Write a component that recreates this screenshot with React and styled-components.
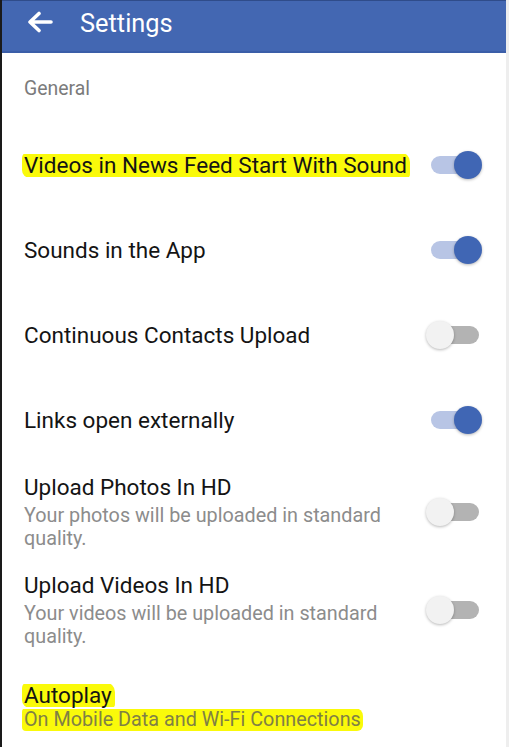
import React from "react";
import styled, { createGlobalStyle } from "styled-components";

const Global = createGlobalStyle`
  html, body { margin: 0; padding: 0; background: #fff; }
  body { font-family: Roboto, "Noto Sans", "Liberation Sans", sans-serif; -webkit-font-smoothing: antialiased; }
`;

const Screen = styled.div`
  width: 509px;
  height: 747px;
  overflow: hidden;
  box-sizing: border-box;
  background: #fff;
  border-left: 2px solid #1a1a1a;
  border-right: 3px solid #eeeeee;
  display: flex;
  flex-direction: column;
`;

const Header = styled.header`
  height: 53px;
  box-sizing: border-box;
  margin-left: -2px;
  margin-right: -3px;
  background: #4367b2;
  border-top: 1px solid #2f4c8a;
  border-bottom: 2px solid #3b5ea8;
  display: flex;
  align-items: center;
  padding-left: 27px;
  gap: 27px;
  color: #fff;
  flex-shrink: 0;
`;

const Title = styled.h1`
  margin: 0;
  font-size: 25.4px;
  font-weight: 400;
  margin-top: -7px;
`;

const BackIcon = styled.svg`
  width: 26px;
  height: 22px;
  margin-top: -8px;
`;

const SectionLabel = styled.div`
  padding: 24px 0 21px 22px;
  line-height: 24px;
  font-size: 19.4px;
  color: #7b7b7b;
`;

const Row = styled.div`
  display: flex;
  align-items: center;
  justify-content: space-between;
  min-height: ${(p) => p.$h || 85}px;
  box-sizing: border-box;
  padding: ${(p) => (p.$pad ? p.$pad : "0")} 24px 0 22px;
`;

const TextBlock = styled.div`
  display: flex;
  flex-direction: column;
  align-items: flex-start;
`;

const Label = styled.span`
  font-size: 22.5px;
  line-height: 26px;
  color: #141414;
  white-space: nowrap;
  ${(p) =>
    p.$mark &&
    `
    background: linear-gradient(to bottom, transparent 8%, #fafa0a 8%, #fafa0a 98%, transparent 98%);
    padding: 0 3px 0 2px;
    margin-left: -2px;
    border-radius: 6px 10px 4px 8px;
  `}
`;

const Sub = styled.span`
  font-size: 19.8px;
  line-height: 23px;
  color: #8c8c8c;
  margin-top: 4px;
  max-width: 375px;
  ${(p) =>
    p.$mark &&
    `
    background: linear-gradient(to bottom, transparent 6%, #fafa0a 6%, #fafa0a 98%, transparent 98%);
    color: #808045;
    padding: 0 2px 0 2px;
    margin-left: -2px;
    margin-top: 0;
    border-radius: 4px 8px 6px 4px;
  `}
`;

const Track = styled.div`
  position: relative;
  width: 56px;
  height: 28px;
  flex-shrink: 0;
  &::before {
    content: "";
    position: absolute;
    left: 5px;
    right: 3px;
    top: 5px;
    height: 18px;
    border-radius: 9px;
    background: ${(p) => (p.$on ? "#b8c5e5" : "#b3b3b3")};
  }
`;

const Thumb = styled.div`
  position: absolute;
  top: 0;
  left: ${(p) => (p.$on ? "28px" : "0")};
  width: 28px;
  height: 28px;
  border-radius: 50%;
  background: ${(p) => (p.$on ? "#4066b4" : "#f2f2f2")};
  box-shadow: 0 1px 3px rgba(0, 0, 0, 0.28);
`;

const Toggle = ({ on }) => (
  <Track $on={on}>
    <Thumb $on={on} />
  </Track>
);

const Footer = styled.div`
  padding: 24px 0 0 22px;
  display: flex;
  flex-direction: column;
  align-items: flex-start;
`;

const items = [
  { label: "Videos in News Feed Start With Sound", on: true, mark: true },
  { label: "Sounds in the App", on: true },
  { label: "Continuous Contacts Upload", on: false },
  { label: "Links open externally", on: true },
];

const hd = [
  { label: "Upload Photos In HD", sub: "Your photos will be uploaded in standard quality.", on: false },
  { label: "Upload Videos In HD", sub: "Your videos will be uploaded in standard quality.", on: false },
];

export default function App() {
  return (
    <>
      <Global />
      <Screen>
        <Header>
          <BackIcon viewBox="0 0 26 22" fill="none">
            <path d="M24 11H4M12 2.5L3 11l9 8.5" stroke="#fff" strokeWidth="3.6" strokeLinecap="round" strokeLinejoin="round" />
          </BackIcon>
          <Title>Settings</Title>
        </Header>
        <SectionLabel>General</SectionLabel>
        {items.map((it) => (
          <Row key={it.label}>
            <TextBlock>
              <Label $mark={it.mark}>{it.label}</Label>
            </TextBlock>
            <Toggle on={it.on} />
          </Row>
        ))}
        {hd.map((it) => (
          <Row key={it.label} $h={98} $pad="2px">
            <TextBlock>
              <Label>{it.label}</Label>
              <Sub>{it.sub}</Sub>
            </TextBlock>
            <Toggle on={it.on} />
          </Row>
        ))}
        <Footer>
          <Label $mark>Autoplay</Label>
          <Sub $mark>On Mobile Data and Wi-Fi Connections</Sub>
        </Footer>
      </Screen>
    </>
  );
}
